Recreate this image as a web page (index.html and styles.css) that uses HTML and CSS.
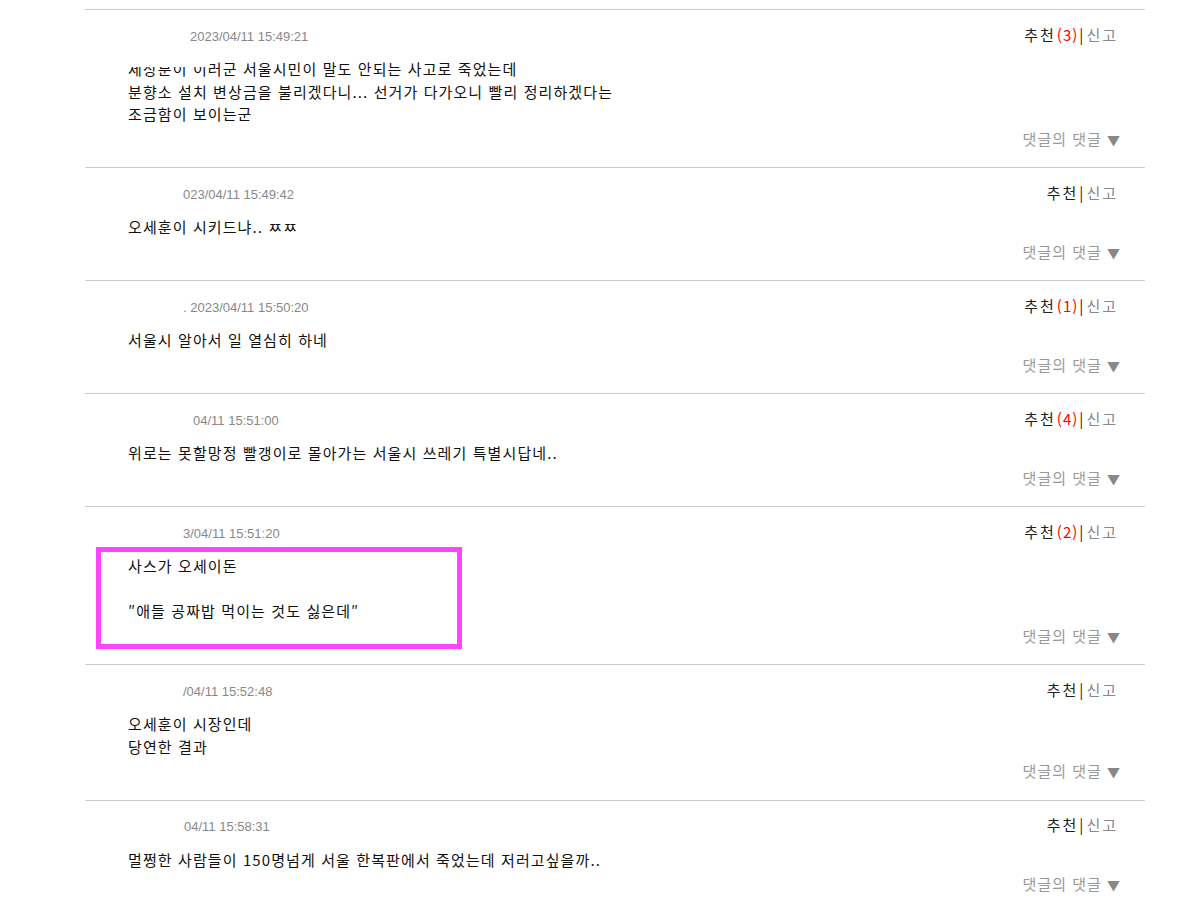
FILE: index.html
```html
<!DOCTYPE html>
<html lang="ko">
<head>
<meta charset="UTF-8">
<meta name="viewport" content="width=device-width, initial-scale=1.0">
<title>댓글</title>
<link rel="stylesheet" href="styles.css">
</head>
<body>
  <div class="comment-list">

    <div class="comment">
      <div class="comment-head">
        <span class="comment-date shift-a">2023/04/11 15:49:21</span>
        <span class="comment-vote">추천<em>(3)</em><i>|</i><b>신고</b></span>
      </div>
      <div class="comment-body">
        <span class="cut-top"></span>
        세상분이 이러군 서울시민이 말도 안되는 사고로 죽었는데<br>
        분향소 설치 변상금을 불리겠다니... 선거가 다가오니 빨리 정리하겠다는<br>
        조금함이 보이는군
      </div>
      <div class="comment-foot">댓글의 댓글 <span class="arrow">▼</span></div>
    </div>

    <div class="comment">
      <div class="comment-head">
        <span class="comment-date">023/04/11 15:49:42</span>
        <span class="comment-vote">추천<i>|</i><b>신고</b></span>
      </div>
      <div class="comment-body">오세훈이 시키드냐.. ㅉㅉ</div>
      <div class="comment-foot">댓글의 댓글 <span class="arrow">▼</span></div>
    </div>

    <div class="comment">
      <div class="comment-head">
        <span class="comment-date">. 2023/04/11 15:50:20</span>
        <span class="comment-vote">추천<em>(1)</em><i>|</i><b>신고</b></span>
      </div>
      <div class="comment-body">서울시 알아서 일 열심히 하네</div>
      <div class="comment-foot">댓글의 댓글 <span class="arrow">▼</span></div>
    </div>

    <div class="comment">
      <div class="comment-head">
        <span class="comment-date shift-b">04/11 15:51:00</span>
        <span class="comment-vote">추천<em>(4)</em><i>|</i><b>신고</b></span>
      </div>
      <div class="comment-body">위로는 못할망정 빨갱이로 몰아가는 서울시 쓰레기 특별시답네..</div>
      <div class="comment-foot">댓글의 댓글 <span class="arrow">▼</span></div>
    </div>

    <div class="comment">
      <div class="highlight"></div>
      <div class="comment-head">
        <span class="comment-date">3/04/11 15:51:20</span>
        <span class="comment-vote">추천<em>(2)</em><i>|</i><b>신고</b></span>
      </div>
      <div class="comment-body">
        사스가 오세이돈<br>
        <br>
        ″애들 공짜밥 먹이는 것도 싫은데″
      </div>
      <div class="comment-foot">댓글의 댓글 <span class="arrow">▼</span></div>
    </div>

    <div class="comment">
      <div class="comment-head">
        <span class="comment-date">/04/11 15:52:48</span>
        <span class="comment-vote">추천<i>|</i><b>신고</b></span>
      </div>
      <div class="comment-body">
        오세훈이 시장인데<br>
        당연한 결과
      </div>
      <div class="comment-foot">댓글의 댓글 <span class="arrow">▼</span></div>
    </div>

    <div class="comment">
      <div class="comment-head">
        <span class="comment-date shift-c">04/11 15:58:31</span>
        <span class="comment-vote">추천<i>|</i><b>신고</b></span>
      </div>
      <div class="comment-body">멀쩡한 사람들이 150명넘게 서울 한복판에서 죽었는데 저러고싶을까..</div>
      <div class="comment-foot">댓글의 댓글 <span class="arrow">▼</span></div>
    </div>

  </div>
</body>
</html>
```

FILE: styles.css
```css
body {
  margin: 0;
  background: #fff;
  font-family: "Noto Sans CJK KR", "Noto Sans", sans-serif;
  color: #111;
}
.comment-list {
  width: 1060px;
  margin: 0 0 0 85px;
  padding-top: 9px;
}
.comment {
  position: relative;
  border-top: 1px solid #ccc;
  padding: 16px 25px 18.5px 43px;
}
.comment-head {
  display: flex;
  justify-content: space-between;
  align-items: center;
  height: 20px;
}
.comment-date {
  margin-left: 55px;
  font-family: "Liberation Sans", Arial, sans-serif;
  font-size: 13px;
  color: #888;
}
.shift-a {
  margin-left: 62px;
}
.shift-b {
  margin-left: 65px;
}
.shift-c {
  margin-left: 56px;
}
.comment-vote {
  margin-right: 2px;
  margin-top: -3px;
  font-size: 15px;
  line-height: 20px;
  color: #222;
  letter-spacing: 2px;
}
.comment-vote em {
  font-style: normal;
  color: #f00;
  letter-spacing: 1px;
  margin-left: 1px;
}
.comment-vote i {
  font-style: normal;
  color: #222;
  margin: 0 1px 0 1px;
}
.comment-vote b {
  font-weight: normal;
  color: #888;
}
.comment-body {
  position: relative;
  margin-top: 12px;
  font-size: 15px;
  line-height: 22.5px;
  letter-spacing: 1.1px;
  color: #111;
}
.cut-top {
  position: absolute;
  left: 0;
  top: 0;
  width: 82px;
  height: 9px;
  background: #fff;
}
.comment-foot {
  height: 20px;
  margin-top: 3px;
  text-align: right;
  font-size: 15px;
  line-height: 20px;
  letter-spacing: 1px;
  color: #999;
}
.arrow {
  display: inline-block;
  font-size: 13px;
  line-height: 1;
  letter-spacing: 0;
  color: #888;
}
.highlight {
  position: absolute;
  left: 11px;
  top: 40px;
  width: 356px;
  height: 92px;
  border: 5px solid #f4f;
}
```
